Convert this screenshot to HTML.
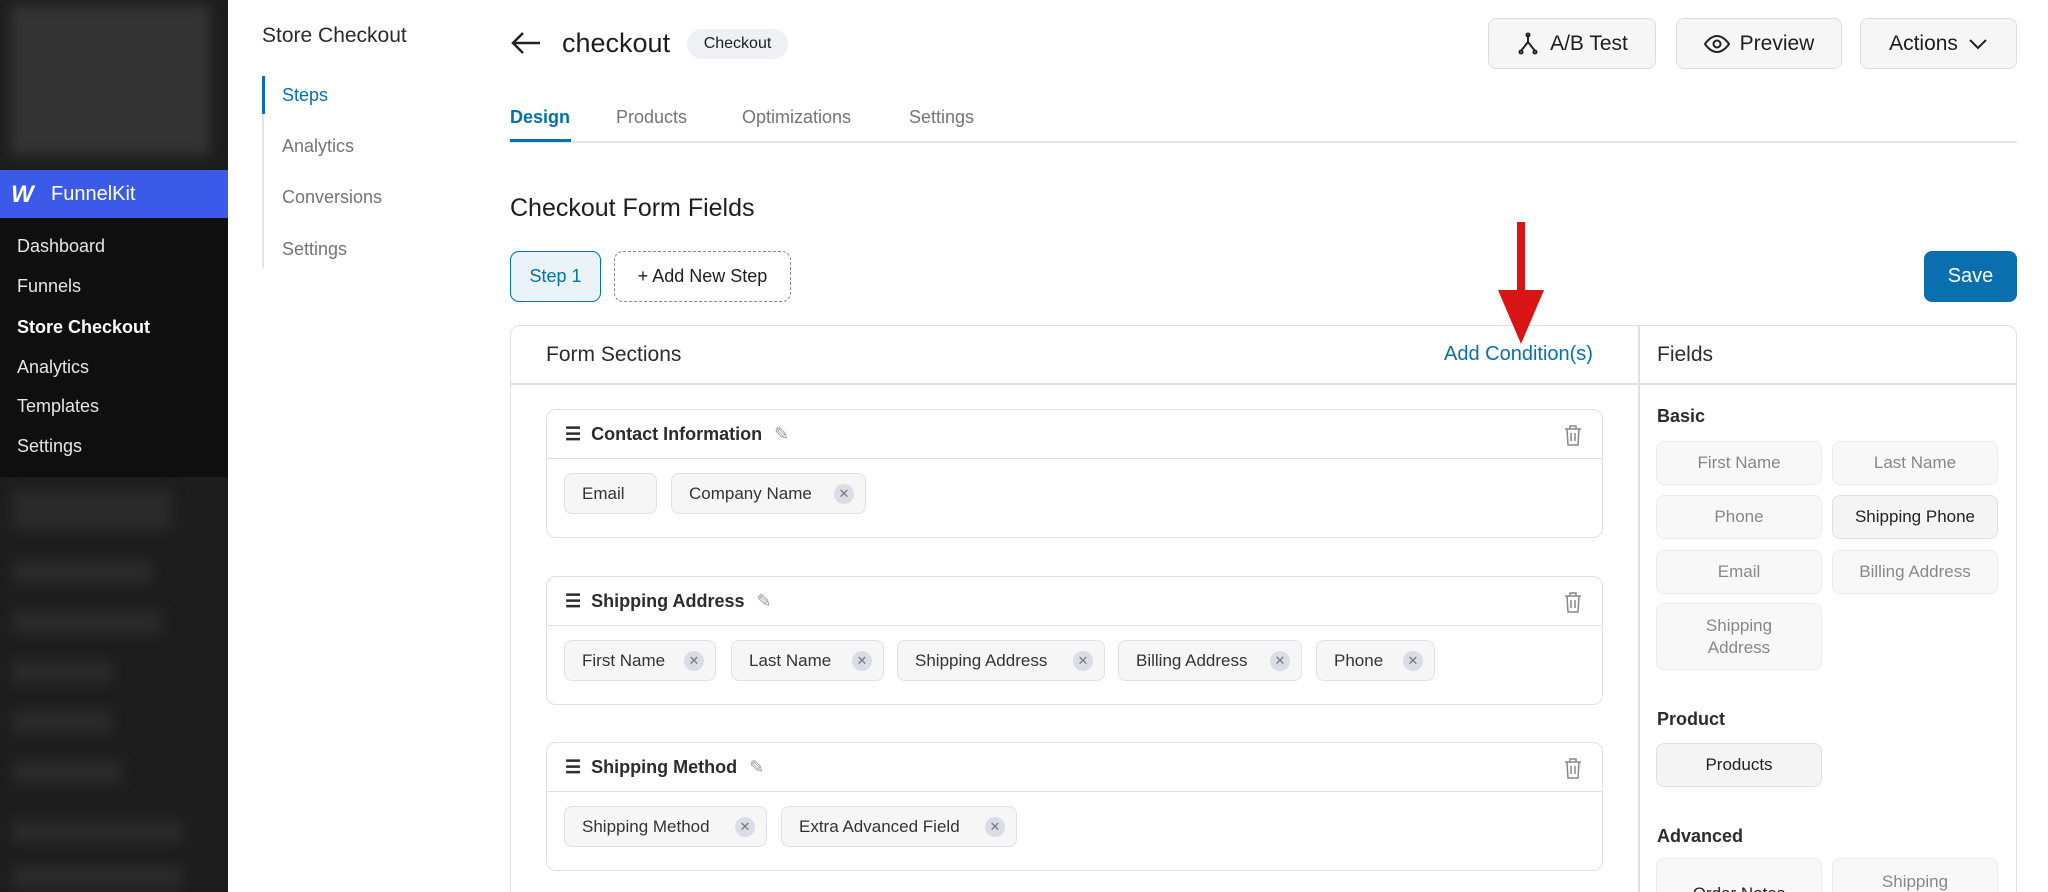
<!DOCTYPE html>
<html><head><meta charset="utf-8"><style>
*{box-sizing:border-box;margin:0;padding:0}
html,body{width:2048px;height:892px;overflow:hidden}
body{background:#fff;font-family:"Liberation Sans",sans-serif;color:#1e1e1e;position:relative}
.a{position:absolute}
.side{left:0;top:0;width:228px;height:892px;background:#1d1d1d}
.blur{background:#2a2a2a;filter:blur(6px);border-radius:4px}
.mi{left:17px;font-size:18px;color:#e6e6e6}
.sn{left:282px;font-size:18px;color:#757575}
.tab{top:107px;font-size:18px;color:#757575}
.btn{border:1px solid #dcdce3;border-radius:8px;background:#f6f6f7;font-size:21px;display:flex;align-items:center;justify-content:center;gap:10px;color:#1e1e1e}
.box{left:546px;width:1057px;height:129px;border:1.5px solid #dfe0ea;border-radius:10px}
.bh{position:absolute;left:0;right:0;top:0;height:49px;border-bottom:1.5px solid #dfe0ea;display:flex;align-items:center;padding-left:18px;font-size:18px;font-weight:bold;color:#2c2c2c}
.chip{position:absolute;top:63px;height:41px;border:1.5px solid #e0e0e8;border-radius:8px;background:#f6f6f7;font-size:17px;color:#333;display:flex;align-items:center;padding-left:17px}
.x{position:absolute;right:11px;top:10px;width:20px;height:20px;border-radius:50%;background:#dcdce6;color:#777;font-size:13px;text-align:center;line-height:20px}
.fb{position:absolute;width:166px;border:1.5px solid #ececf0;border-radius:8px;background:#f8f8f9;font-size:17px;color:#888;display:flex;align-items:center;justify-content:center;text-align:center;line-height:22px}
.lbl{left:1657px;font-size:18px;font-weight:bold;color:#2c2c2c}
.trash{position:absolute;right:20px;top:14px}
</style></head><body>
<div class="a side"></div>
<div class="a blur" style="left:10px;top:5px;width:200px;height:150px;background:#333"></div>
<div class="a" style="left:0;top:170px;width:228px;height:48px;background:#3b5ae8"></div>
<div class="a" style="left:11px;top:181px;font-size:24px;font-weight:bold;color:#fff;font-style:italic">W</div>
<div class="a" style="left:51px;top:183px;font-size:20px;color:#fff">FunnelKit</div>
<div class="a" style="left:0;top:218px;width:228px;height:259px;background:#0f0f0f"></div>
<div class="a mi" style="top:236px">Dashboard</div>
<div class="a mi" style="top:276px">Funnels</div>
<div class="a mi" style="top:317px;color:#fff;font-weight:bold">Store Checkout</div>
<div class="a mi" style="top:357px">Analytics</div>
<div class="a mi" style="top:396px">Templates</div>
<div class="a mi" style="top:436px">Settings</div>
<div class="a blur" style="left:12px;top:490px;width:160px;height:40px"></div>
<div class="a blur" style="left:12px;top:560px;width:140px;height:24px"></div>
<div class="a blur" style="left:12px;top:610px;width:150px;height:24px"></div>
<div class="a blur" style="left:12px;top:660px;width:100px;height:24px"></div>
<div class="a blur" style="left:12px;top:710px;width:100px;height:24px"></div>
<div class="a blur" style="left:12px;top:760px;width:110px;height:24px"></div>
<div class="a blur" style="left:12px;top:820px;width:170px;height:24px"></div>
<div class="a blur" style="left:12px;top:865px;width:170px;height:24px"></div>

<div class="a" style="left:262px;top:24px;font-size:21px;color:#2c2c2c">Store Checkout</div>
<div class="a" style="left:262px;top:76px;width:2px;height:192px;background:#e2e2e8"></div>
<div class="a" style="left:262px;top:76px;width:3px;height:38px;background:#0073aa"></div>
<div class="a sn" style="top:85px;color:#0073aa">Steps</div>
<div class="a sn" style="top:136px">Analytics</div>
<div class="a sn" style="top:187px">Conversions</div>
<div class="a sn" style="top:239px">Settings</div>

<svg class="a" style="left:510px;top:30px" width="32" height="26" viewBox="0 0 32 26"><path d="M30 13H3M13 3L3 13l10 10" fill="none" stroke="#222" stroke-width="2.5"/></svg>
<div class="a" style="left:562px;top:28px;font-size:27px;color:#1e1e1e">checkout</div>
<div class="a" style="left:687px;top:29px;width:101px;height:30px;border-radius:15px;background:#eef0f3;font-size:16px;display:flex;align-items:center;justify-content:center">Checkout</div>

<div class="a btn" style="left:1488px;top:18px;width:168px;height:51px"><svg width="24" height="24" viewBox="0 0 24 24" fill="none" stroke="#222" stroke-width="2"><path d="M12 3v7M12 10L5 19M12 10l7 9"/><circle cx="12" cy="3" r="1.5"/><circle cx="5" cy="20" r="1.5"/><circle cx="19" cy="20" r="1.5"/></svg>A/B Test</div>
<div class="a btn" style="left:1676px;top:18px;width:166px;height:51px"><svg width="26" height="18" viewBox="0 0 26 18" fill="none" stroke="#222" stroke-width="2"><path d="M1 9s5-8 12-8 12 8 12 8-5 8-12 8S1 9 1 9z"/><circle cx="13" cy="9" r="3.5"/></svg>Preview</div>
<div class="a btn" style="left:1860px;top:18px;width:157px;height:51px">Actions <svg width="20" height="12" viewBox="0 0 20 12"><path d="M2 2l8 8 8-8" fill="none" stroke="#222" stroke-width="2"/></svg></div>

<div class="a tab" style="left:510px;color:#0073aa;font-weight:bold">Design</div>
<div class="a tab" style="left:616px">Products</div>
<div class="a tab" style="left:742px">Optimizations</div>
<div class="a tab" style="left:909px">Settings</div>
<div class="a" style="left:510px;top:141px;width:1507px;height:2px;background:#e2e2e8"></div>
<div class="a" style="left:510px;top:139px;width:61px;height:3px;background:#0073aa"></div>

<div class="a" style="left:510px;top:194px;font-size:25px;color:#1e1e1e">Checkout Form Fields</div>
<div class="a" style="left:510px;top:251px;width:91px;height:51px;border:1.5px solid #0073aa;border-radius:9px;background:#eaf3f8;color:#0073aa;font-size:18px;display:flex;align-items:center;justify-content:center">Step 1</div>
<div class="a" style="left:614px;top:251px;width:177px;height:51px;border:1.5px dashed #888;border-radius:9px;font-size:18px;display:flex;align-items:center;justify-content:center">+ Add New Step</div>
<div class="a" style="left:1924px;top:251px;width:93px;height:51px;border-radius:8px;background:#0a6fae;color:#fff;font-size:20px;display:flex;align-items:center;justify-content:center">Save</div>

<div class="a" style="left:510px;top:325px;width:1507px;height:580px;border:1.5px solid #dfe0ea;border-radius:10px"></div>
<div class="a" style="left:1638px;top:325px;width:1.5px;height:567px;background:#dfe0ea"></div>
<div class="a" style="left:510px;top:383px;width:1507px;height:1.5px;background:#dfe0ea"></div>
<div class="a" style="left:546px;top:343px;font-size:21px;color:#2c2c2c">Form Sections</div>
<div class="a" style="left:1444px;top:343px;font-size:20px;color:#0a6fae">Add Condition(s)</div>
<div class="a" style="left:1657px;top:343px;font-size:21px;color:#2c2c2c">Fields</div>

<svg class="a" style="left:1496px;top:222px" width="50" height="124" viewBox="0 0 50 124"><path d="M21 0h8v68h19L25 122 2 68h19z" fill="#d81414"/></svg>

<div class="a box" style="top:409px"><div class="bh">☰&nbsp;&nbsp;Contact Information <span style="font-weight:normal;color:#999;margin-left:12px">✎</span><svg class="trash" width="18" height="22" viewBox="0 0 18 22" fill="none" stroke="#888" stroke-width="1.5"><path d="M1 5h16M6 5V2h6v3M3 5l1 16h10l1-16M7 9v8M11 9v8"/></svg></div>
<div class="chip" style="left:17px;width:93px">Email</div>
<div class="chip" style="left:124px;width:195px">Company Name<span class="x">✕</span></div></div>

<div class="a box" style="top:576px"><div class="bh">☰&nbsp;&nbsp;Shipping Address <span style="font-weight:normal;color:#999;margin-left:12px">✎</span><svg class="trash" width="18" height="22" viewBox="0 0 18 22" fill="none" stroke="#888" stroke-width="1.5"><path d="M1 5h16M6 5V2h6v3M3 5l1 16h10l1-16M7 9v8M11 9v8"/></svg></div>
<div class="chip" style="left:17px;width:152px">First Name<span class="x">✕</span></div>
<div class="chip" style="left:184px;width:153px">Last Name<span class="x">✕</span></div>
<div class="chip" style="left:350px;width:208px">Shipping Address<span class="x">✕</span></div>
<div class="chip" style="left:571px;width:184px">Billing Address<span class="x">✕</span></div>
<div class="chip" style="left:769px;width:119px">Phone<span class="x">✕</span></div></div>

<div class="a box" style="top:742px"><div class="bh">☰&nbsp;&nbsp;Shipping Method <span style="font-weight:normal;color:#999;margin-left:12px">✎</span><svg class="trash" width="18" height="22" viewBox="0 0 18 22" fill="none" stroke="#888" stroke-width="1.5"><path d="M1 5h16M6 5V2h6v3M3 5l1 16h10l1-16M7 9v8M11 9v8"/></svg></div>
<div class="chip" style="left:17px;width:203px">Shipping Method<span class="x">✕</span></div>
<div class="chip" style="left:234px;width:236px">Extra Advanced Field<span class="x">✕</span></div></div>

<div class="a lbl" style="top:406px">Basic</div>
<div class="fb" style="left:1656px;top:441px;height:44px">First Name</div>
<div class="fb" style="left:1832px;top:441px;height:44px">Last Name</div>
<div class="fb" style="left:1656px;top:495px;height:44px">Phone</div>
<div class="fb" style="left:1832px;top:495px;height:44px;color:#222;background:#f4f4f5;border-color:#dedee4">Shipping Phone</div>
<div class="fb" style="left:1656px;top:550px;height:44px">Email</div>
<div class="fb" style="left:1832px;top:550px;height:44px">Billing Address</div>
<div class="fb" style="left:1656px;top:603px;height:67px">Shipping<br>Address</div>
<div class="a lbl" style="top:709px">Product</div>
<div class="fb" style="left:1656px;top:743px;height:44px;color:#222;background:#f4f4f5;border-color:#dedee4">Products</div>
<div class="a lbl" style="top:826px">Advanced</div>
<div class="fb" style="left:1656px;top:858px;height:60px;color:#222;align-items:flex-start;padding-top:24px">Order Notes</div>
<div class="fb" style="left:1832px;top:858px;height:60px;align-items:flex-start;padding-top:12px">Shipping</div>
</body></html>
